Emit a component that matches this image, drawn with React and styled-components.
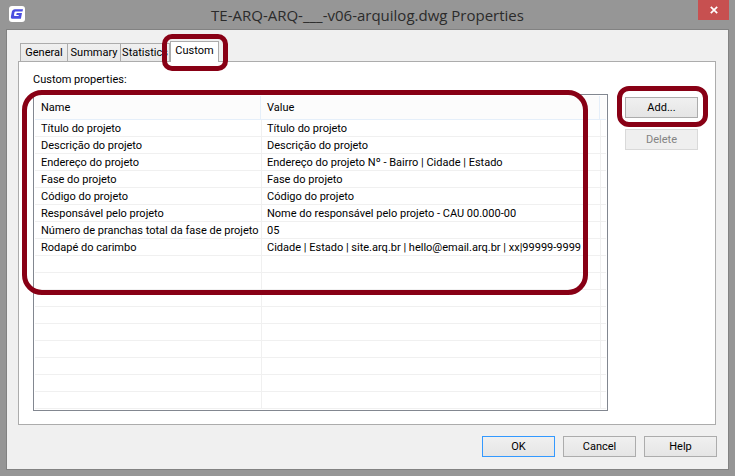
import React from "react";
import styled, { createGlobalStyle, css } from "styled-components";

const GlobalStyle = createGlobalStyle`
  * { box-sizing: border-box; }
  body {
    margin: 0;
    background: #969696;
    color: #000;
    font: 11px/14px Roboto, "Liberation Sans", sans-serif;
  }
`;

const Window = styled.div`
  display: flex;
  flex-direction: column;
  min-height: 100vh;
  padding: 0 6px 6px;
`;

const TitleBar = styled.header`
  position: relative;
  display: flex;
  align-items: center;
  justify-content: center;
  height: 29px;
`;

const AppIcon = styled.svg`
  position: absolute;
  left: 3px;
  top: 6px;
  width: 16px;
  height: 16px;
`;

const Title = styled.h1`
  margin: 0;
  color: #2b2b2b;
  font: 400 15px/20px "Open Sans", "Noto Sans", sans-serif;
  white-space: nowrap;
`;

const CloseButton = styled.button`
  position: absolute;
  top: 0;
  right: 0;
  display: flex;
  align-items: center;
  justify-content: center;
  width: 31px;
  height: 20px;
  padding: 0;
  border: 0;
  background: #c75050;
`;

const Client = styled.main`
  display: flex;
  flex: 1;
  flex-direction: column;
  padding: 11px 12px 12px 11px;
  border: 1px solid #828282;
  background: #f0f0f0;
`;

const TabList = styled.div`
  display: flex;
  align-items: flex-end;
  height: 20px;
  padding-left: 2px;
`;

const Tab = styled.button`
  width: ${(p) => p.$width}px;
  height: 18px;
  padding: 0;
  border: 1px solid #acacac;
  border-width: 1px 1px 0 0;
  background: linear-gradient(#f0f0f0, #e8e8e8);
  color: #000;
  font: inherit;
  text-align: center;
  white-space: nowrap;

  &:first-child {
    border-left-width: 1px;
  }

  ${(p) =>
    p.$active &&
    css`
      position: relative;
      height: 21px;
      margin-bottom: -1px;
      border-left-width: 1px;
      padding-bottom: 3px;
      background: #fff;
    `}
`;

const Panel = styled.section`
  display: flex;
  flex: 1;
  align-items: flex-start;
  gap: 17px;
  padding: 11px 17px 13px 14px;
  border: 1px solid #acacac;
  background: #fff;
`;

const ListArea = styled.div`
  flex: 1;
  min-width: 0;
`;

const ListLabel = styled.div`
  margin-bottom: 7px;
`;

const ListBox = styled.div`
  position: relative;
  padding: 1px;
  border: 1px solid #828790;
`;

const Table = styled.table`
  width: 100%;
  border-collapse: separate;
  border-spacing: 0;
  table-layout: fixed;
`;

const NameCol = styled.col`
  width: 227px;
`;

const EndCol = styled.col`
  width: 5px;
`;

const HeadCell = styled.th`
  height: 24px;
  padding: 1px 5px 0;
  border-bottom: 1px solid #e5effa;
  background: linear-gradient(#e5effa, #e5effa) right 1px top / 1px 100% no-repeat #fcfcfc;
  font-weight: 400;
  text-align: left;

  &:first-child {
    padding-left: 6px;
  }

  &:last-child {
    background: #fcfcfc;
    padding: 0;
  }
`;

const Cell = styled.td`
  height: 17px;
  padding: 2px 5px 0;
  border: 1px solid #f0f0f0;
  border-width: 0 1px 1px 0;
  white-space: nowrap;

  &:first-child {
    padding-left: 6px;
  }

  &:last-child {
    border-right: 0;
    padding: 0;
  }
`;

const SideButtons = styled.div`
  display: flex;
  flex-direction: column;
  gap: 11px;
  padding-top: 24px;
`;

const Footer = styled.footer`
  display: flex;
  justify-content: flex-end;
  gap: 8px;
  padding-top: 11px;
  margin-right: -1px;
`;

const Button = styled.button`
  width: 73px;
  height: 21px;
  padding: 0;
  border: 1px solid ${(p) => (p.$primary ? "#3399ff" : "#acacac")};
  background: linear-gradient(#f0f0f0, #e5e5e5);
  color: #000;
  font: inherit;

  &:disabled {
    border-color: #d9d9d9;
    background: #efefef;
    color: #838383;
  }
`;

const Anchor = styled.div`
  position: relative;
  display: flex;
`;

const Ring = styled.span`
  position: absolute;
  z-index: 2;
  border: 5px solid #880015;
  pointer-events: none;
`;

const TabRing = styled(Ring)`
  inset: -7px -9px -10px -8px;
  border-radius: 10px;
`;

const ListRing = styled(Ring)`
  top: -5px;
  left: -12px;
  right: 19px;
  height: 205px;
  border-radius: 20px;
`;

const ButtonRing = styled(Ring)`
  inset: -11px -10px -9px -8px;
  border-radius: 12px;
`;

const properties = [
  ["Título do projeto", "Título do projeto"],
  ["Descrição do projeto", "Descrição do projeto"],
  ["Endereço do projeto", "Endereço do projeto Nº - Bairro | Cidade | Estado"],
  ["Fase do projeto", "Fase do projeto"],
  ["Código do projeto", "Código do projeto"],
  ["Responsável pelo projeto", "Nome do responsável pelo projeto - CAU 00.000-00"],
  ["Número de pranchas total da fase de projeto", "05"],
  ["Rodapé do carimbo", "Cidade | Estado | site.arq.br | hello@email.arq.br | xx|99999-9999"],
];

const rows = [...properties, ...Array.from({ length: 9 }, () => ["", ""])];

export default function App() {
  return (
    <>
      <GlobalStyle />
      <Window>
        <TitleBar>
          <AppIcon viewBox="0 0 16 16" aria-hidden="true">
            <rect width="16" height="16" rx="3" fill="#fff" />
            <path
              d="M14 3.200 13.500 5.400H6.600c-.6 0-1 .3-1.100.8l-.5 2.900c-.1.600.2.900.7.900h3.800l.3-1.100H7.300l.4-2h5.300L11.900 12.800H3.800c-1.500 0-2.200-.9-1.900-2.300l1-4.900C3.200 4.100 4.400 3.200 5.900 3.200z"
              fill="#4a4de0"
            />
          </AppIcon>
          <Title>TE-ARQ-ARQ-___-v06-arquilog.dwg Properties</Title>
          <CloseButton aria-label="Close">
            <svg width="8" height="8" viewBox="0 0 8 8" aria-hidden="true">
              <path d="M.8.8 7.200 7.200M7.200.8.8 7.200" stroke="#fff" strokeWidth="1.700" />
            </svg>
          </CloseButton>
        </TitleBar>
        <Client>
          <TabList role="tablist">
            <Tab role="tab" $width={48}>General</Tab>
            <Tab role="tab" $width={53}>Summary</Tab>
            <Tab role="tab" $width={49}>Statistics</Tab>
            <Anchor>
              <Tab role="tab" aria-selected="true" $active $width={49}>Custom</Tab>
              <TabRing />
            </Anchor>
          </TabList>
          <Panel role="tabpanel">
            <ListArea>
              <ListLabel id="list-label">Custom properties:</ListLabel>
              <ListBox>
                <Table aria-labelledby="list-label">
                  <colgroup>
                    <NameCol />
                    <col />
                    <EndCol />
                  </colgroup>
                  <thead>
                    <tr>
                      <HeadCell>Name</HeadCell>
                      <HeadCell>Value</HeadCell>
                      <HeadCell />
                    </tr>
                  </thead>
                  <tbody>
                    {rows.map(([name, value], i) => (
                      <tr key={i}>
                        <Cell>{name}</Cell>
                        <Cell>{value}</Cell>
                        <Cell />
                      </tr>
                    ))}
                  </tbody>
                </Table>
                <ListRing />
              </ListBox>
            </ListArea>
            <SideButtons>
              <Anchor>
                <Button>Add...</Button>
                <ButtonRing />
              </Anchor>
              <Button disabled>Delete</Button>
            </SideButtons>
          </Panel>
          <Footer>
            <Button $primary>OK</Button>
            <Button>Cancel</Button>
            <Button>Help</Button>
          </Footer>
        </Client>
      </Window>
    </>
  );
}
